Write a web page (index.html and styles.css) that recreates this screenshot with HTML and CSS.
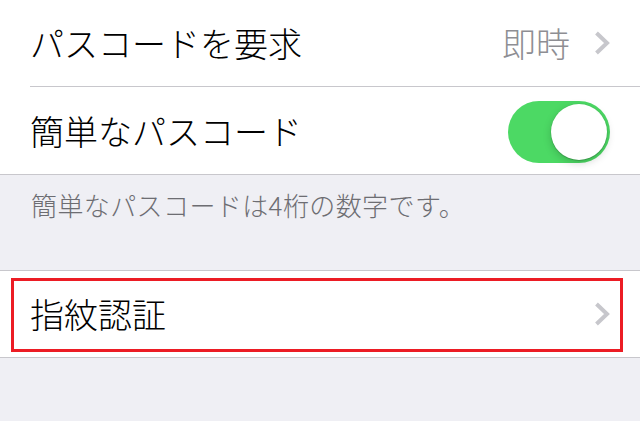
FILE: index.html
```html
<!DOCTYPE html>
<html lang="ja">
<head>
<meta charset="utf-8">
<title>パスコード設定</title>
<link rel="stylesheet" href="styles.css">
</head>
<body>
  <div class="group group-first">
    <div class="cell">
      <div class="cell-inner has-sep">
        <span class="label">パスコードを要求</span>
        <span class="accessory">
          <span class="value">即時</span>
          <svg class="chevron" width="16" height="24" viewBox="0 0 16 24"><polyline points="2.5,2 13,12 2.5,22" /></svg>
        </span>
      </div>
    </div>
    <div class="cell">
      <div class="cell-inner tall">
        <span class="label">簡単なパスコード</span>
        <span class="switch on"><span class="knob"></span></span>
      </div>
    </div>
  </div>
  <div class="footer">簡単なパスコードは4桁の数字です。</div>
  <div class="group group-second">
    <div class="cell highlighted">
      <div class="cell-inner">
        <span class="label">指紋認証</span>
        <svg class="chevron" width="16" height="24" viewBox="0 0 16 24"><polyline points="2.5,2 13,12 2.5,22" /></svg>
      </div>
      <span class="highlight"></span>
    </div>
  </div>
</body>
</html>
```
FILE: styles.css
```css
html, body {
  margin: 0;
  padding: 0;
}
body {
  background: #efeff4;
  font-family: "Noto Sans CJK JP", "Noto Sans", sans-serif;
  font-weight: 300;
  width: 640px;
  height: 421px;
  overflow: hidden;
}
.group {
  background: #ffffff;
}
.group-first {
  border-bottom: 1px solid #c8c7cc;
}
.group-second {
  border-top: 1px solid #c8c7cc;
  border-bottom: 1px solid #c8c7cc;
}
.cell {
  padding-left: 30px;
  position: relative;
}
.cell-inner {
  height: 86px;
  display: flex;
  align-items: center;
  justify-content: space-between;
  padding-right: 30px;
}
.cell-inner.tall {
  height: 87px;
}
.has-sep {
  border-bottom: 1px solid #c8c7cc;
}
.label {
  font-size: 34px;
  color: #000;
  line-height: 40px;
}
.accessory {
  display: flex;
  align-items: center;
  gap: 24px;
}
.value {
  font-size: 34px;
  color: #8e8e93;
  line-height: 40px;
}
.chevron {
  display: block;
  fill: none;
  stroke: #c7c7cc;
  stroke-width: 4;
  stroke-linejoin: miter;
}
.switch {
  width: 102px;
  height: 62px;
  border-radius: 31px;
  background: #4cd964;
  position: relative;
  display: block;
  margin-top: 2px;
}
.knob {
  position: absolute;
  right: 3px;
  top: 3px;
  width: 56px;
  height: 56px;
  border-radius: 50%;
  background: #fff;
  box-shadow: 0 3px 8px rgba(0, 0, 0, 0.18), 0 1px 1px rgba(0, 0, 0, 0.16), 0 0 0 0.5px rgba(0, 0, 0, 0.06);
}
.footer {
  height: 95px;
  box-sizing: border-box;
  padding: 12px 30px 0 31px;
  font-size: 26px;
  letter-spacing: 0.4px;
  line-height: 36px;
  color: #6d6d72;
}
.highlight {
  position: absolute;
  left: 11px;
  right: 17px;
  top: 7px;
  bottom: 5px;
  border: 3px solid #ec1c24;
  pointer-events: none;
}
```
